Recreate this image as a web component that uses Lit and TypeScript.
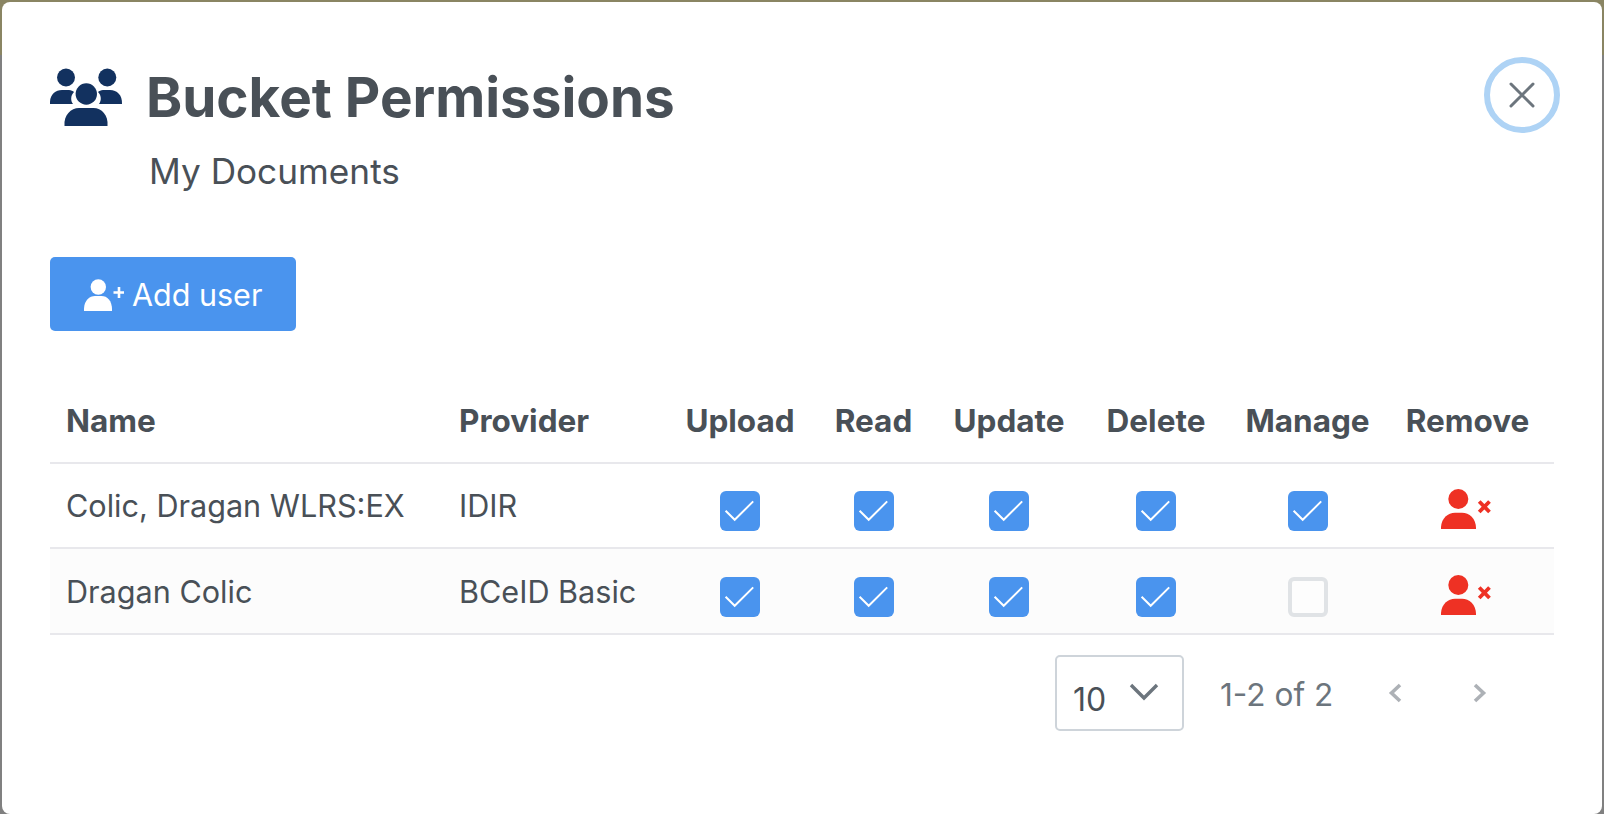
import { LitElement, html, css } from "lit";
import { customElement } from "lit/decorators.js";

const personX = html`<svg class="rm" width="50" height="41" viewBox="0 0 50 41">
  <circle cx="17.3" cy="10" r="10" fill="#ee3124"></circle>
  <path d="M0 40 C-.5 30 6.5 23.7 14 23.7 h7 C28.5 23.7 35.5 30 35 40 Z" fill="#ee3124"></path>
  <path d="M38.2 12.500 L48.500 23 M48.500 12.500 L38.2 23" stroke="#ee3124" stroke-width="3.8" fill="none"></path>
</svg>`;

const check = (on: boolean) => html`<span class="cb ${on ? "on" : ""}">${on
  ? html`<svg width="40" height="40" viewBox="0 0 40 40"><path d="M5.6 19.7 L14.7 28.8 L33.2 10.4" stroke="#fff" stroke-width="2" fill="none"></path></svg>`
  : ""}</span>`;

@customElement("app-root")
export class AppRoot extends LitElement {
  static styles = css`
    :host { display: block; height: 814px; box-sizing: border-box; padding: 2px 2px 0;
      background: linear-gradient(#8a8563 0 55px, #808080 55px);
      font-family: Inter, "Liberation Sans", sans-serif; color: #495057; overflow: hidden; }
    .modal { height: 812px; box-sizing: border-box; background: #fff; border-radius: 8px;
      padding: 55px 48px 0; }
    .head { display: flex; align-items: flex-start; height: 138px; }
    .icon { margin-top: 11px; width: 96px; flex: none; }
    .titles { flex: 1; }
    h1 { margin: 10px 0 0; font-size: 54.8px; line-height: 60px; font-weight: 700; color: #495057; }
    .sub { margin: 24px 0 0 3px; font-size: 35.2px; line-height: 40px; }
    .close { width: 76px; height: 76px; box-sizing: border-box; border: 6px solid #aed3f5; border-radius: 50%;
      display: flex; align-items: center; justify-content: center; margin-right: -6px; }
    .add { display: inline-flex; align-items: center; box-sizing: border-box; width: 246px; height: 74px;
      margin-top: 62px; padding: 0 0 0 34px; gap: 8px; background: #4a94ee; color: #fff; border-radius: 5px;
      font-size: 30.5px; }
    .add svg { margin-top: 1px; }
    table { width: 1504px; border-collapse: collapse; table-layout: fixed; margin-top: 47px; font-size: 30.6px; }
    th { box-sizing: border-box; font-weight: 700; font-size: 31.5px; height: 85px; text-align: center; padding: 1px 0 0; border-bottom: 2px solid #e8e8ec; }
    th.w-rm { padding-right: 8px; }
    td { height: 83px; padding: 0; text-align: center; border-bottom: 2px solid #e8e8ec; }
    tr.alt td { height: 84px; background: #fcfcfc; }
    th.l, td.l { text-align: left; padding-left: 16px; }
    .w-name { width: 393px; } .w-prov { width: 222px; } .w-up { width: 150px; } .w-rd { width: 117px; }
    .w-ud { width: 154px; } .w-del { width: 140px; } .w-man { width: 163px; } .w-rm { width: 165px; }
    .cw { display: flex; justify-content: center; padding-top: 10px; }
    .rw { display: flex; justify-content: center; padding: 7px 11px 0 0; }
    tr.alt .cw { padding-top: 12px; }
    tr.alt .rw { padding-top: 9px; }
    .cb { display: block; width: 40px; height: 40px; box-sizing: border-box; border-radius: 6px;
      border: 4px solid #e0e3e6; background: #fdfdfd; }
    .cb.on { border: 0; background: #4a94ee; }
    .cb svg { display: block; }
    .foot { display: flex; align-items: flex-start; margin-top: 20px; padding-left: 1005px; }
    .sel { width: 129px; height: 76px; box-sizing: border-box; border: 2px solid #ced4da; border-radius: 5px;
      display: flex; align-items: flex-start; font-size: 32px; padding: 23px 0 0 16px; }
    .sel svg { margin: 2px 0 0 23px; }
    .count { margin: 18px 0 0 36px; font-size: 31.6px; line-height: 44px; color: #6c757d; width: 168px; }
    .pg { margin: 28px 0 0 0; display: block; }
    .pg.n { margin-left: 71px; }
  `;

  row(name: string, prov: string, flags: boolean[], alt: boolean) {
    return html`<tr class=${alt ? "alt" : ""}>
      <td class="l">${name}</td><td class="l">${prov}</td>
      ${flags.map((f) => html`<td><div class="cw">${check(f)}</div></td>`)}
      <td><div class="rw">${personX}</div></td>
    </tr>`;
  }

  render() {
    return html`<div class="modal">
      <div class="head">
        <svg class="icon" height="60" viewBox="0 0 96 60" fill="#12315f">
          <circle cx="16" cy="9.5" r="9"></circle>
          <circle cx="57.3" cy="9.5" r="9"></circle>
          <path d="M0 36 C-.5 27 5 22 12 22 h7 C21 22 23 23 24 24 C21 27 20 32 23 36 Z"></path>
          <path d="M72 36 C72.5 27 67 22 60 22 h-7 C51 22 49 23 48 24 C51 27 52 32 49 36 Z"></path>
          <circle cx="36.3" cy="26" r="10.7"></circle>
          <path d="M14.5 58 C13.5 47 21 40 29 40 h14.5 C51.5 40 58.5 47 57.5 58 Z"></path>
        </svg>
        <div class="titles"><h1>Bucket Permissions</h1><div class="sub">My Documents</div></div>
        <div class="close"><svg width="28" height="28" viewBox="0 0 28 28"><path d="M3 3 L25 25 M25 3 L3 25" stroke="#6c757d" stroke-width="3" stroke-linecap="round"></path></svg></div>
      </div>
      <div class="add">
        <svg width="40" height="32" viewBox="0 0 40 32" fill="#fff">
          <circle cx="14.3" cy="8" r="7.7"></circle>
          <path d="M0 32 C-.5 22 5 17 11 17 h6.500 C23.500 17 28.500 22 28 32 Z"></path>
          <path d="M29.500 13.500 H40.500 M35 8 V19" stroke="#fff" stroke-width="2.600" fill="none"></path>
        </svg>
        <span>Add user</span>
      </div>
      <table>
        <thead><tr>
          <th class="l w-name">Name</th><th class="l w-prov">Provider</th>
          <th class="w-up">Upload</th><th class="w-rd">Read</th><th class="w-ud">Update</th>
          <th class="w-del">Delete</th><th class="w-man">Manage</th><th class="w-rm">Remove</th>
        </tr></thead>
        <tbody>
          ${this.row("Colic, Dragan WLRS:EX", "IDIR", [true, true, true, true, true], false)}
          ${this.row("Dragan Colic", "BCeID Basic", [true, true, true, true, false], true)}
        </tbody>
      </table>
      <div class="foot">
        <div class="sel"><span>10</span>
          <svg width="30" height="20" viewBox="0 0 30 20"><path d="M2 3 L15 16 L28 3" stroke="#6c757d" stroke-width="3.4" fill="none"></path></svg>
        </div>
        <div class="count">1-2 of 2</div>
        <svg class="pg" width="14" height="20" viewBox="0 0 14 20"><path d="M12 2 L3.500 10 L12 18" stroke="#adb1b6" stroke-width="3.600" fill="none"></path></svg>
        <svg class="pg n" width="14" height="20" viewBox="0 0 14 20"><path d="M2 2 L10.500 10 L2 18" stroke="#adb1b6" stroke-width="3.600" fill="none"></path></svg>
      </div>
    </div>`;
  }
}
